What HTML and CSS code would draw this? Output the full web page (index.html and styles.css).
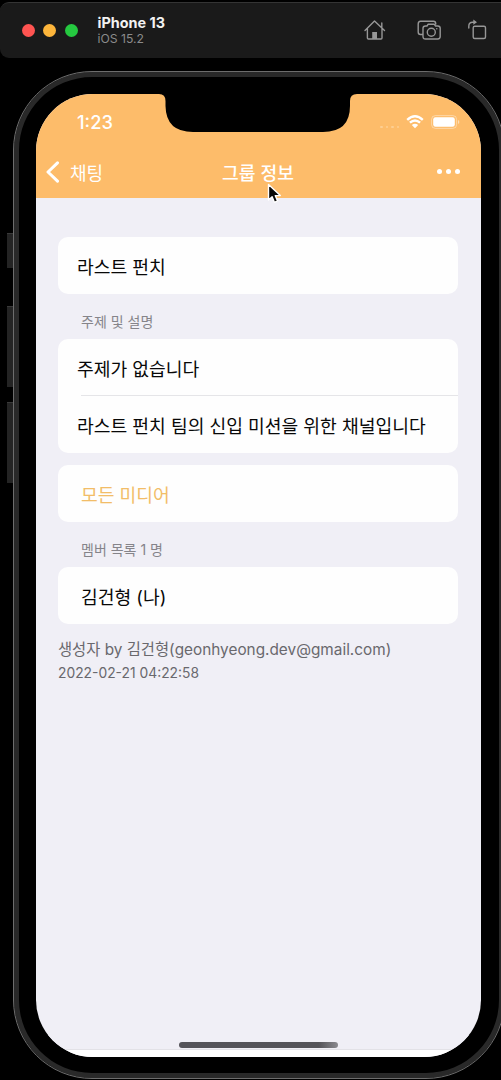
FILE: index.html
```html
<!DOCTYPE html>
<html lang="ko">
<head>
<meta charset="utf-8">
<title>그룹 정보</title>
<link rel="stylesheet" href="styles.css">
</head>
<body>
<header class="window-bar">
  <div class="lights"><i class="red"></i><i class="amber"></i><i class="green"></i></div>
  <div class="window-title"><strong>iPhone 13</strong><span>iOS 15.2</span></div>
  <div class="tools">
    <svg width="22" height="22" viewBox="0 0 22 22"><path d="M1 11.4 10.5 2 20.5 11.4M3.4 9.5V19q0 1 1 1H17q1 0 1-1V9.5M17.8 8.4V4"/><path class="solid" d="M8.2 20v-7h4.8v7z"/></svg>
    <svg width="24" height="22" viewBox="0 0 24 22"><path d="M5.2 15.5H3.5Q1.2 15.5 1.2 13V5Q1.2 2.3 3.5 2.3H16.5Q18.7 2.3 18.8 5M8.5 7H10l1.2-1.8h6L18.5 7h2.3q2.4 0 2.4 2.2v8.4q0 2.4-2.4 2.4H8.5Q6 20 6 17.6V9.2Q6 7 8.5 7Z"/><circle cx="14.3" cy="13.2" r="4"/><circle class="solid" cx="19.8" cy="9.8" r=".8"/></svg>
    <svg class="rotate" width="20" height="22" viewBox="0 0 20 22"><rect x="6.2" y="7.2" width="12.3" height="12.3" rx="1.5"/><path d="M1.8 9V7.2Q1.8 3.3 5.6 3.3H8"/><path class="solid" d="M6.3.6v5.2L10 3.2z"/></svg>
  </div>
</header>
<main class="device">
  <i class="key mute"></i><i class="key up"></i><i class="key down"></i>
  <div class="screen">
    <div class="top">
      <svg class="notch" width="198" height="39" viewBox="0 0 198 39"><path d="M0 0Q6.5 0 6.5 7V12Q7 38 34 38H164Q191 38 191 12V7Q191 0 198 0Z"/></svg>
      <div class="status">
        <span class="time">1:23</span>
        <div class="signals">
          <span class="dots"><i></i><i></i><i></i><i></i></span>
          <svg width="18" height="14" viewBox="0 0 18 14"><path d="M1.2 4.8Q9-2.2 16.8 4.8M3.9 7.7Q9 3.2 14.1 7.7" fill="none" stroke="#fff" stroke-width="2.4"/><path d="M5.8 10.1Q9 7.6 12.2 10.1L9 13.2Z" fill="#fff"/></svg>
          <svg width="29" height="14" viewBox="0 0 29 14"><rect x=".6" y=".6" width="25" height="12.8" rx="3.8" fill="none" stroke="#fff" stroke-opacity=".4"/><rect x="2.2" y="2.2" width="21.6" height="9.6" rx="2.2" fill="#fff"/><path d="M27 5v4q1.3-.5 1.3-2T27 5" fill="#fff" opacity=".5"/></svg>
        </div>
      </div>
      <nav class="nav">
        <div class="back"><svg width="14" height="22" viewBox="0 0 14 22"><path d="M11.5 1.8 2 11l9.5 9.2"/></svg><span>채팅</span></div>
        <h1>그룹 정보</h1>
        <div class="more"><i></i><i></i><i></i></div>
      </nav>
    </div>
    <div class="content">
      <section class="card first"><p class="row">라스트 펀치</p></section>
      <h2>주제 및 설명</h2>
      <section class="card"><p class="row divided">주제가 없습니다</p><p class="row">라스트 펀치 팀의 신입 미션을 위한 채널입니다</p></section>
      <section class="card media"><p class="row inset accent">모든 미디어</p></section>
      <h2>멤버 목록 1 명</h2>
      <section class="card"><p class="row inset">김건형 (나)</p></section>
      <p class="creator">생성자 by 김건형(geonhyeong.dev@gmail.com)</p>
      <p class="created">2022-02-21 04:22:58</p>
    </div>
    <footer class="bottom"><i class="home-bar"></i></footer>
  </div>
</main>
<svg class="pointer" width="16" height="22" viewBox="0 0 16 22"><path d="M1.5 1.5V17l3.6-3.3 2.3 5.6 3.2-1.4-2.3-5.3h5z"/></svg>
</body>
</html>
```
FILE: styles.css
```css
* { box-sizing: border-box; }
body { margin: 0; width: 501px; height: 1080px; overflow: hidden; background: #000; font-family: Inter, "Noto Sans CJK KR", sans-serif; position: relative; }
p, h1, h2 { margin: 0; font-weight: 400; }
i { display: block; }

.window-bar { margin-top: 2px; width: 520px; height: 56px; background: #1a1a1a; border-top: 1px solid #343434; border-radius: 9px; display: flex; align-items: center; padding: 0 0 2px 21.5px; }
.lights { display: flex; flex: none; gap: 8.5px; padding-top: 1px; }
.lights i { width: 13px; height: 13px; border-radius: 50%; }
.red { background: #ff5451; }
.amber { background: #fdb53b; }
.green { background: #25c940; }
.window-title { flex: none; width: 286px; padding-left: 20px; display: flex; flex-direction: column; }
.window-title strong { font-size: 14.4px; line-height: 17px; color: #f2f2f2; font-weight: 700; }
.window-title span { font-size: 12.2px; line-height: 15px; color: #8b8b8b; }
.tools { display: flex; flex: none; align-items: center; gap: 31px; }
.tools svg { flex: none; fill: none; stroke: #979797; stroke-width: 1.4; stroke-linejoin: round; stroke-linecap: round; }
.tools .rotate { margin-left: -5px; }
.tools .solid { fill: #979797; stroke: none; }

.device { position: relative; margin: 13px 0 0 13px; width: 492px; height: 1008px; border: 1px solid #6d6d6d; border-radius: 79px; background: #000; box-shadow: inset 0 0 0 5px #292929; padding: 22px; }
.key { position: absolute; left: -7px; width: 6px; background: #242424; border-top: 1px solid #393939; }
.mute { top: 161px; height: 35px; }
.up { top: 234px; height: 81px; }
.down { top: 330px; height: 81px; }
.screen { width: 445px; height: 963px; border-radius: 57px; overflow: hidden; background: #f0eff6; display: flex; flex-direction: column; }
.top { height: 104px; background: #fdbc6a; position: relative; }
.notch { position: absolute; left: 123px; top: 0; }
.status { height: 56px; display: flex; justify-content: space-between; padding: 0 20px 0 41px; align-items: center; }
.time { color: #fff; font-size: 18.3px; font-weight: 500; }
.signals { display: flex; align-items: center; gap: 7px; padding-right: 1px; }
.dots { display: flex; gap: 3px; padding-top: 10px; }
.dots i { width: 2.5px; height: 2.5px; border-radius: 50%; background: #fecf92; }
.nav { height: 43px; display: grid; grid-template-columns: 1fr auto 1fr; align-items: center; padding: 0 20px 0 10px; color: #fff; }
.back { display: flex; align-items: center; gap: 10px; font-size: 18px; }
.back svg { fill: none; stroke: #fff; stroke-width: 3; stroke-linecap: round; stroke-linejoin: round; }
.nav h1 { font-size: 18.2px; font-weight: 500; padding-left: 9px; }
.more { display: flex; justify-content: flex-end; gap: 4px; padding-right: 1px; }
.more i { width: 5px; height: 5px; background: #fff; border-radius: 50%; }

.content { flex: 1; padding: 39px 23px 0 22px; }
.card { border-radius: 10px; background: #fefefe; }
.row { height: 57px; padding: 2px 0 0 19px; font-size: 18.2px; line-height: 57px; white-space: nowrap; color: #080808; }
.divided { background: linear-gradient(#e5e5e8, #e5e5e8) right bottom / 377px 1px no-repeat; }
.inset { padding-left: 23px; }
.accent { color: #f2bd68; }
.media { margin-top: 12px; }
.content h2 { height: 45px; padding: 17px 0 0 23px; font-size: 14px; line-height: 22px; color: #85848a; }
.creator { margin-top: 14px; font-size: 15.35px; line-height: 23px; color: #69686d; white-space: nowrap; }
.created { font-size: 13.85px; line-height: 24px; color: #69686d; }
.bottom { height: 22px; flex: none; display: flex; flex-direction: column; align-items: center; background: linear-gradient(#f0eff6 0 14px, #e3e2e7 14px 15px, #fff 15px); padding-top: 7px; }
.home-bar { width: 159px; height: 6px; border-radius: 3px; background: linear-gradient(90deg, #55545a, #555459 88%, #8b8a8f); }
.pointer { position: absolute; left: 267px; top: 183px; fill: #080808; stroke: #fff; stroke-width: 1.4; stroke-linejoin: round; }
```
